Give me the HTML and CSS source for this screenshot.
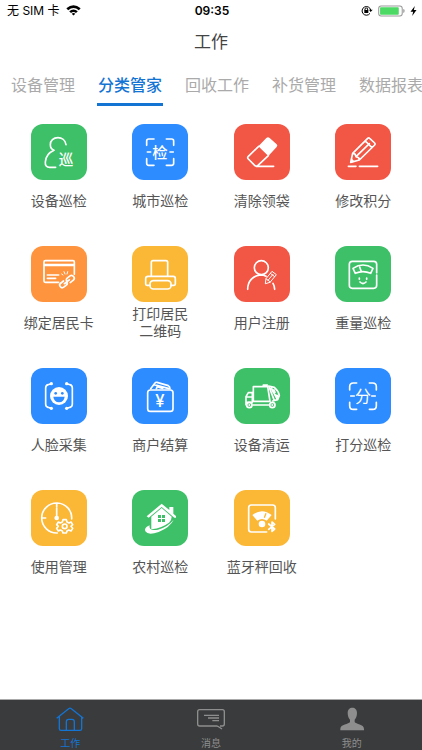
FILE: index.html
```html
<!DOCTYPE html>
<html lang="zh-CN">
<head>
<meta charset="utf-8">
<meta name="viewport" content="width=device-width, initial-scale=1">
<title>工作</title>
<link rel="stylesheet" href="styles.css">
</head>
<body>
<header>
  <div class="status">
    <div class="status-left">
      <span>无 SIM 卡</span>
      <svg class="wifi" viewBox="0 0 42 30" aria-hidden="true"><path d="M1 9Q21-8 41 9L36 14Q21 2 6 14ZM9 17Q21 7 33 17L28 22Q21 16 14 22ZM16 24Q21 20 26 24L21 29Z"/></svg>
    </div>
    <time class="clock">09:35</time>
    <div class="status-right">
      <svg class="lock" viewBox="0 0 36 33" aria-hidden="true"><path class="ring" d="M27 25A13 13 0 1 1 29 15"/><path d="M24 14H35L29 21ZM10 15H22V24H10Z"/><path class="ring" d="M12 16V12Q12 9 16 9Q20 9 20 12V16"/></svg>
      <svg class="battery" viewBox="0 0 78 33" aria-hidden="true"><rect class="case" x="2" y="2" width="68" height="29" rx="7"/><rect class="charge" x="6" y="6" width="54" height="21" rx="2"/><path class="tip" d="M73 11Q77 12 77 16Q77 21 73 22Z"/></svg>
      <svg class="bolt" viewBox="0 0 20 30" aria-hidden="true"><path d="M14 0L1 17H9L6 30L19 12H11Z"/></svg>
    </div>
  </div>
  <h1>工作</h1>
  <nav class="tabs" aria-label="分类">
    <a href="#device">设备管理</a>
    <a href="#sort" class="active" aria-current="page">分类管家</a>
    <a href="#recycle">回收工作</a>
    <a href="#supply">补货管理</a>
    <a href="#report">数据报表</a>
  </nav>
</header>

<main class="grid">
  <button class="app green">
    <svg viewBox="0 0 168 168" aria-hidden="true"><path class="w5" d="M105 62C103 48 92 41 81 41C67 41 58 50 58 62C58 71 62 76 69 79C53 86 44 99 43 114C42 125 47 130 56 130H74"/><text class="glyph-bold" x="105" y="124" font-size="44">巡</text></svg>
    <span>设备巡检</span>
  </button>
  <button class="app blue">
    <svg viewBox="0 0 168 168" aria-hidden="true"><path class="w4" d="M44 64V51Q44 45 50 45H66M103 45H119Q125 45 125 51V64M125 104V118Q125 124 119 124H103M66 124H50Q44 124 44 118V104M46 84H56M114 84H124"/><text class="glyph-bold" x="84" y="101" font-size="46">检</text></svg>
    <span>城市巡检</span>
  </button>
  <button class="app red">
    <svg viewBox="0 0 168 168" aria-hidden="true"><path class="w4" d="M74 67L43 97Q39 101 43 105L62 124Q67 129 72 124L103 95M66 127H119"/><path class="fill" d="M73 67L97 42Q102 37 107 42L128 61Q132 65 128 69L103 96Z"/></svg>
    <span>清除领袋</span>
  </button>
  <button class="app red">
    <svg viewBox="0 0 168 168" aria-hidden="true"><path class="w4" d="M47 115L53 88L98 43Q101 40 104 43L119 57Q122 60 119 63L73 108ZM91 51L111 71M53 88L60 90L63 98L71 101L73 108M63 98L103 59M40 127H63M73 127H128"/><path class="fill" d="M47 116L50 103L59 113Z"/></svg>
    <span>修改积分</span>
  </button>
  <button class="app orange">
    <svg viewBox="0 0 168 168" aria-hidden="true"><path class="w4" d="M83 109H43Q39 109 39 105V48Q39 44 43 44H126Q130 44 130 48V85M49 87H83M49 97H74"/><path class="w8" d="M39 57H130"/><path class="w3" d="M92 84L96 87M99 77L102 84M110 77L108 84"/><g transform="rotate(-38 108 107)"><path class="w4" d="M101 99H90Q83 99 83 106Q83 114 90 114H100Q106 114 107 108M114 115H126Q133 115 133 107Q133 99 126 99H115Q109 99 108 106M98 107H117"/></g></svg>
    <span>绑定居民卡</span>
  </button>
  <button class="app yellow">
    <svg viewBox="0 0 168 168" aria-hidden="true"><path class="w5" d="M58 91V49Q58 44 63 44H102Q107 44 107 49V91M54 118H45Q41 118 41 114V98Q41 91 48 91H124Q130 91 130 98V114Q130 118 126 118H117"/><rect class="w5" x="54" y="104" width="63" height="25" rx="10"/></svg>
    <span>打印居民<br>二维码</span>
  </button>
  <button class="app red">
    <svg viewBox="0 0 168 168" aria-hidden="true"><circle class="w4" cx="82" cy="65" r="21"/><path class="w4" d="M41 130C41 105 58 88 80 87Q89 87 96 91M122 130Q122 120 117 112"/><path class="w3" d="M94 112L96 98L114 76L127 86L109 108ZM109 82L122 92M96 98L109 108M102 103L117 85"/></svg>
    <span>用户注册</span>
  </button>
  <button class="app green">
    <svg viewBox="0 0 168 168" aria-hidden="true"><path class="w4" d="M125 80V55Q125 46 116 46H52Q43 46 43 55V118Q43 127 52 127H116Q125 127 125 118V87M54 67Q84 47 114 67L107 82Q84 72 61 82ZM78 74L74 63"/><path class="w4" d="M73 96V100M95 96V100M75 108Q84 117 93 108"/></svg>
    <span>重量巡检</span>
  </button>
  <button class="app blue">
    <svg viewBox="0 0 168 168" aria-hidden="true"><path class="w4" d="M60 47L51 50Q44 52 44 60V108Q44 116 51 118L60 121M108 47L117 50Q124 52 124 60V108Q124 116 117 118L108 121"/><circle class="fill" cx="61" cy="47" r="5"/><circle class="fill" cx="61" cy="121" r="5"/><circle class="fill" cx="107" cy="47" r="5"/><circle class="fill" cx="107" cy="121" r="5"/><circle class="fill" cx="84" cy="84" r="27"/><circle class="cut" cx="74" cy="76" r="4"/><circle class="cut" cx="94" cy="76" r="4"/><path class="cut" d="M67 86H101Q99 102 84 103Q69 102 67 86Z"/></svg>
    <span>人脸采集</span>
  </button>
  <button class="app blue">
    <svg viewBox="0 0 168 168" aria-hidden="true"><rect class="w4" x="47" y="66" width="76" height="64" rx="8"/><path class="w4" d="M56 62L69 45Q71 42 75 43L109 53Q114 55 114 62M66 50L111 62M73 62L76 56L92 61"/><text class="glyph-bold" x="84" y="116" font-size="50">¥</text></svg>
    <span>商户结算</span>
  </button>
  <button class="app green">
    <svg viewBox="0 0 168 168" aria-hidden="true"><path class="w4" d="M55 74H43L36 86V110M55 74V103M38 87H54M58 56H101L108 100H58ZM88 55V51H100M57 111H104M36 103H54"/><path class="w4" d="M104 54L121 58Q134 70 136 82L131 95L116 99M105 56L121 98M112 60L130 94"/><path class="fill" d="M120 78L134 81L129 95ZM112 64L122 64L126 74L117 76Z"/><circle class="w4" cx="46" cy="111" r="8"/><circle class="w4" cx="115" cy="111" r="8"/><circle class="fill" cx="46" cy="111" r="3"/><circle class="fill" cx="115" cy="111" r="3"/></svg>
    <span>设备清运</span>
  </button>
  <button class="app blue">
    <svg viewBox="0 0 168 168" aria-hidden="true"><path class="w4" d="M44 66V56Q44 45 55 45H65M103 45H113Q124 45 124 56V66M124 103V113Q124 124 113 124H103M65 124H55Q44 124 44 113V103M47 84H58M110 84H121"/><text class="glyph" x="84" y="101" font-size="48">分</text></svg>
    <span>打分巡检</span>
  </button>
  <button class="app yellow">
    <svg viewBox="0 0 168 168" aria-hidden="true"><path class="w4" d="M122 87A45 45 0 1 0 79 129M77 40V51M33 84H44"/><path class="w5" d="M77 54V82"/><circle class="fill" cx="77" cy="84" r="7"/><path class="w4" d="M96 89H106L108 96L114 99L120 96L125 104L120 109L125 115L120 123L113 120L108 123L106 129H96L94 123L88 120L82 123L77 115L82 109L77 104L82 96L88 99L94 96Z"/><circle class="w4" cx="101" cy="109" r="7"/></svg>
    <span>使用管理</span>
  </button>
  <button class="app green">
    <svg viewBox="0 0 168 168" aria-hidden="true"><path class="fill" d="M44 79L89 41L112 60V51H124V71L132 78V83H127L89 51L50 83Z"/><path class="fill" d="M58 80L89 54L119 80Q119 91 111 98Q91 113 58 118Z"/><path class="cut" d="M78 75H87V84H78ZM90 75H99V84H90ZM78 87H87V96H78ZM90 87H99V96H90Z"/><path class="fill" d="M53 106Q35 113 40 124Q48 137 80 126Q115 111 125 89Q107 111 78 119Q48 124 53 106Z"/></svg>
    <span>农村巡检</span>
  </button>
  <button class="app yellow">
    <svg viewBox="0 0 168 168" aria-hidden="true"><path class="w4" d="M124 87V53Q124 45 116 45H52Q44 45 44 53V118Q44 126 52 126H98"/><path class="fill" d="M55 75Q84 52 113 75L98 92Q84 82 70 92Z"/><circle class="fill" cx="84" cy="102" r="10"/><path class="slit" d="M91 83L96 70"/><path class="w4" d="M104 102L122 117L114 124V96L122 103L104 118"/></svg>
    <span>蓝牙秤回收</span>
  </button>
</main>

<footer>
  <a href="#work" class="active" aria-current="page">
    <svg viewBox="0 0 84 78" aria-hidden="true"><path d="M2 37L38 8Q42 5 46 8L82 37M10 32V68Q10 73 15 73H72Q77 73 77 68V32M31 72V47Q31 40 38 40H48Q55 40 55 47V72"/></svg>
    <span>工作</span>
  </a>
  <a href="#message">
    <svg viewBox="0 0 84 78" aria-hidden="true"><path d="M61 60H8Q2 60 2 54V17Q2 11 8 11H76Q82 11 82 17V54Q82 60 76 60H69M61 60L75 69M21 28H66M33 36H66M46 44H66"/></svg>
    <span>消息</span>
  </a>
  <a href="#mine">
    <svg viewBox="0 0 84 78" aria-hidden="true"><path class="solid" d="M43 5C51 5 57 11 57 20C57 30 54 36 50 41V48C53 55 78 54 78 69V73H7V69C7 54 33 55 36 48V41C32 36 29 30 29 20C29 11 35 5 43 5Z"/></svg>
    <span>我的</span>
  </a>
</footer>
</body>
</html>
```

FILE: styles.css
```css
* {
  box-sizing: border-box;
}

body {
  margin: 0;
  min-height: 100vh;
  display: flex;
  flex-direction: column;
  background: #fff;
  color: #555;
  font-family: Inter, "Noto Sans CJK SC", sans-serif;
}

a {
  color: inherit;
  text-decoration: none;
}

/* Status bar */
.status {
  display: grid;
  grid-template-columns: 1fr auto 1fr;
  align-items: center;
  height: 21px;
  padding: 0 5px 0 7px;
  color: #000;
  font-size: 12px;
  line-height: 20px;
}

.status-left,
.status-right {
  display: flex;
  align-items: center;
  gap: 6px;
}

.status-right {
  justify-content: flex-end;
  gap: 5px;
}

.clock {
  font-size: 12px;
  font-weight: 600;
}

.wifi {
  width: 15px;
  height: 11px;
}

.lock {
  width: 12px;
  height: 11px;
}

.battery {
  width: 27px;
  height: 12px;
}

.bolt {
  width: 7px;
  height: 10px;
}

.ring {
  fill: none;
  stroke: #000;
  stroke-width: 3;
}

.case {
  fill: none;
  stroke: #999;
  stroke-width: 3;
}

.charge {
  fill: #4cd964;
}

.tip {
  fill: #999;
}

h1 {
  margin: 0;
  color: #444;
  font-size: 17px;
  font-weight: 400;
  line-height: 43px;
  text-align: center;
}

/* Category tabs */
.tabs {
  display: flex;
  gap: 21px;
  padding-left: 10px;
  overflow: hidden;
  color: #aaa;
  font-size: 16px;
  line-height: 35px;
  text-align: center;
  white-space: nowrap;
}

.tabs a {
  flex: 0 0 66px;
  padding-top: 4px;
  border-bottom: 3px solid transparent;
}

.tabs .active {
  color: #1474d4;
  border-color: #1474d4;
  font-weight: 500;
}

/* App grid */
.grid {
  flex: 1;
  display: grid;
  grid-template-columns: repeat(4, 1fr);
  align-content: start;
  row-gap: 26px;
  padding: 18px 8px;
}

.app {
  display: flex;
  flex-direction: column;
  align-items: center;
  padding: 0;
  border: 0;
  background: none;
  color: #555;
  font: inherit;
  font-size: 14px;
  line-height: 17px;
}

.app svg {
  width: 56px;
  height: 56px;
  border-radius: 12px;
  background: var(--tile);
}

.app span {
  display: flex;
  flex-direction: column;
  justify-content: center;
  height: 40px;
}

.app br {
  display: none;
}

.app span:has(br) {
  display: block;
  padding-top: 3px;
}

.app span:has(br) br {
  display: inline;
}

.green { --tile: #3dc067; }
.blue { --tile: #2d8cff; }
.red { --tile: #f25644; }
.orange { --tile: #ff943f; }
.yellow { --tile: #fbb736; }

.w3, .w4, .w5, .w8 {
  fill: none;
  stroke: #fff;
  stroke-linecap: round;
  stroke-linejoin: round;
}

.w3 { stroke-width: 3; }
.w4 { stroke-width: 5; }
.w5 { stroke-width: 5; }

.w8 {
  stroke-width: 8;
  stroke-linecap: butt;
}

.fill {
  fill: #fff;
}

.cut {
  fill: var(--tile);
}

.slit {
  stroke: var(--tile);
  stroke-width: 4;
}

.glyph, .glyph-bold {
  fill: #fff;
  text-anchor: middle;
}

.glyph-bold {
  font-weight: 500;
}

/* Bottom bar */
footer {
  display: flex;
  height: 51px;
  border-top: 1px solid #aaa;
  background: #3a3b3c;
  color: #8e8e8e;
  font-size: 10px;
  line-height: 14px;
}

footer a {
  flex: 1;
  display: flex;
  flex-direction: column;
  align-items: center;
  gap: 4px;
  padding-top: 6px;
}

footer .active {
  color: #1474d4;
}

footer svg {
  width: 28px;
  height: 26px;
  fill: none;
  stroke: currentColor;
  stroke-width: 4;
  stroke-linejoin: round;
}

.solid {
  fill: currentColor;
  stroke: none;
}
```
